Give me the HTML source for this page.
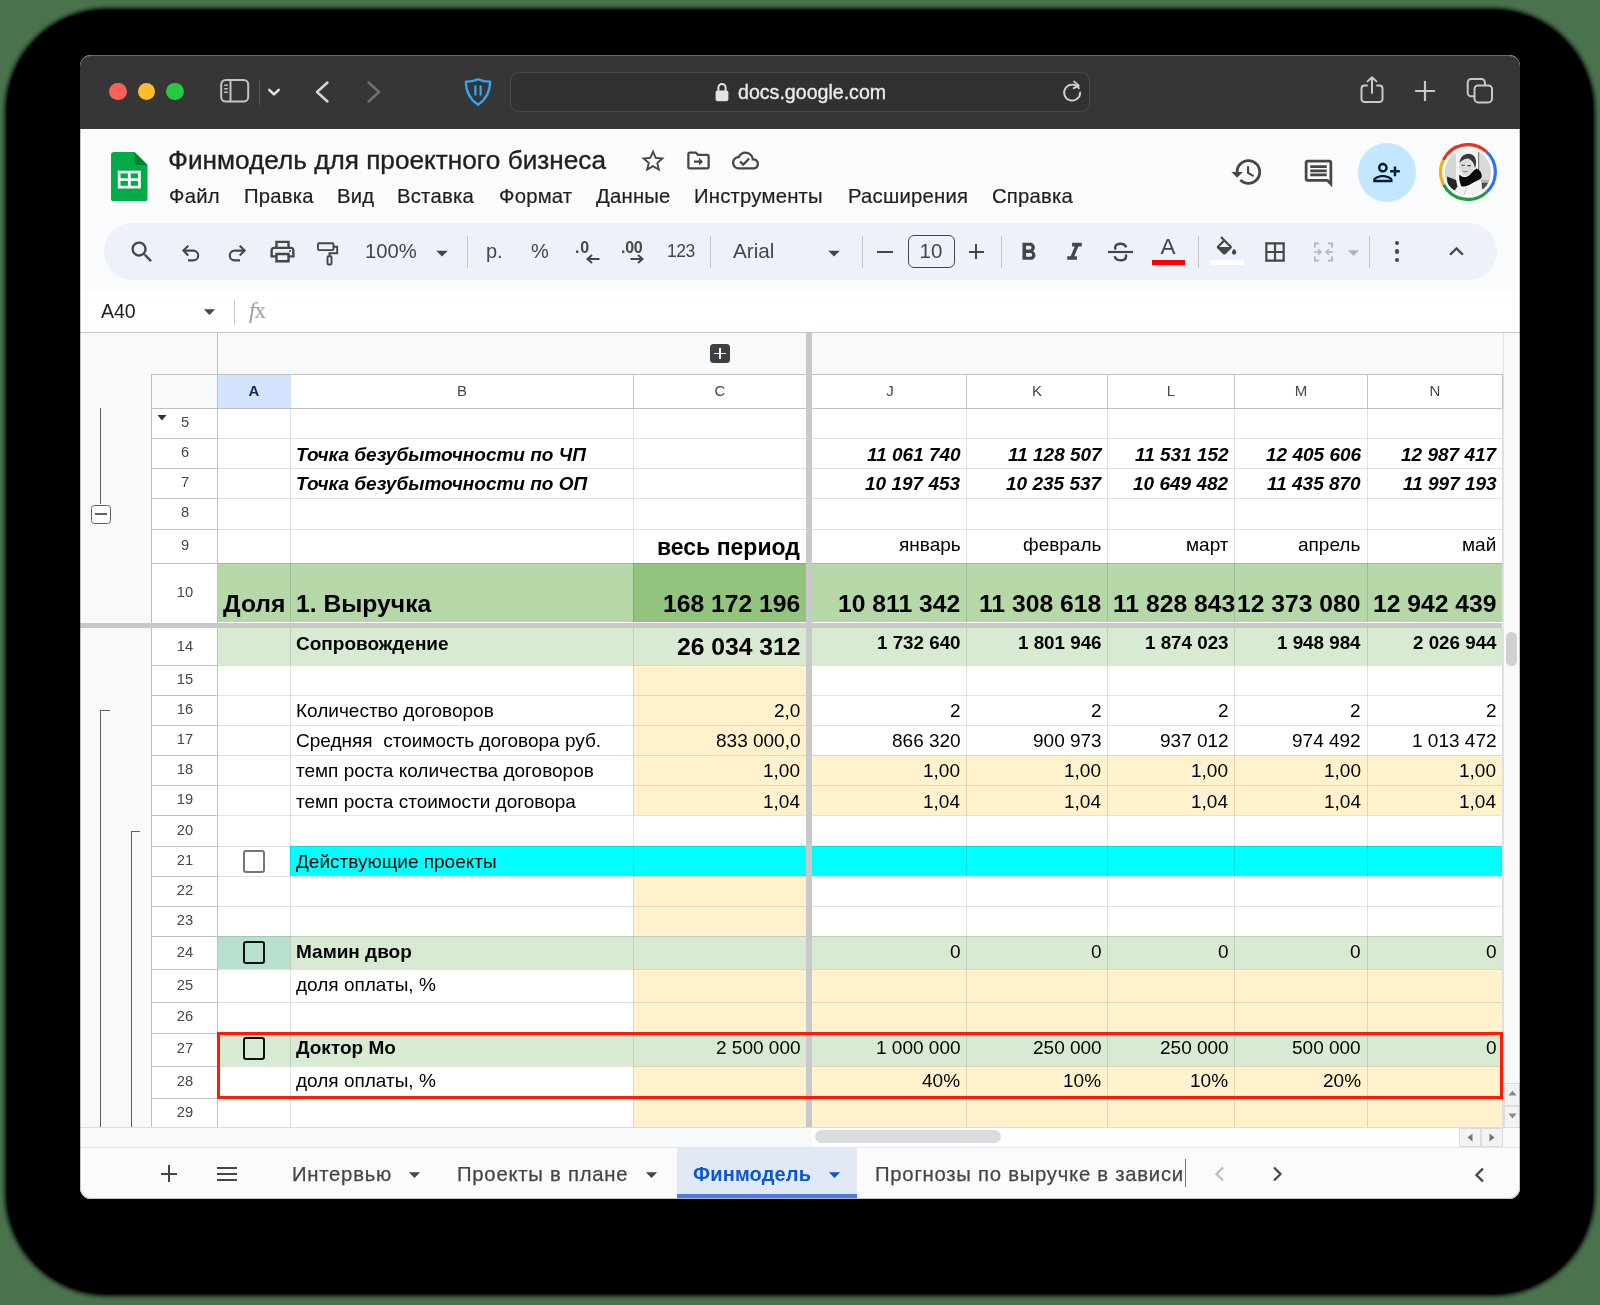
<!DOCTYPE html>
<html><head><meta charset="utf-8"><title>Sheets</title>
<style>
html,body{margin:0;padding:0}
body{width:1600px;height:1305px;overflow:hidden;background:#49724d;position:relative;font-family:"Liberation Sans",sans-serif;}
div,svg{position:absolute;box-sizing:border-box}
.t{white-space:pre;line-height:1;color:#000;will-change:transform}
#shadow{left:7px;top:10px;width:1586px;height:1284px;border-radius:100px;background:#000;box-shadow:0 0 4px 2px #000}
#win{left:80px;top:55px;width:1440px;height:1144px;border-radius:11px;overflow:hidden;background:#fff}
#wb{left:0;top:74px;width:1440px;height:1070px;border:1px solid rgba(0,0,0,.22);border-top:none;border-radius:0 0 11px 11px}
#pg{left:-80px;top:-55px;width:1600px;height:1305px;}
</style></head>
<body>
<div id="shadow"></div>
<div id="win"><div id="pg">
<div style="left:80px;top:55px;width:1440px;height:74.4px;background:#363636;border-top:1px solid #6c6c6c;border-radius:11px 11px 0 0"></div>
<div style="left:109.25px;top:82.75px;width:17.5px;height:17.5px;border-radius:50%;background:#fe5f57"></div>
<div style="left:137.75px;top:82.75px;width:17.5px;height:17.5px;border-radius:50%;background:#febc2e"></div>
<div style="left:166.25px;top:82.75px;width:17.5px;height:17.5px;border-radius:50%;background:#28c840"></div>
<svg style="left:219px;top:77px;" width="32" height="28" viewBox="0 0 32 28"><rect x="2.2" y="3" width="27" height="21.5" rx="4.5" fill="none" stroke="#c4c4c4" stroke-width="2"/><path d="M11.5 3v21.5" stroke="#c4c4c4" stroke-width="2"/><path d="M5.2 8.3h3.6M5.2 11.8h3.6M5.2 15.3h3.6" stroke="#c4c4c4" stroke-width="1.5"/></svg>
<div style="left:258.5px;top:80px;width:1px;height:25px;background:#555"></div>
<svg style="left:266px;top:84px;" width="16" height="16" viewBox="0 0 16 16"><path d="M3.2 5.8L8 10.4l4.8-4.6" fill="none" stroke="#e6e6e6" stroke-width="2.4" stroke-linecap="round" stroke-linejoin="round"/></svg>
<svg style="left:312px;top:79px;" width="22" height="26" viewBox="0 0 22 26"><path d="M15.5 3.5L5 13l10.5 9.5" fill="none" stroke="#d6d6d6" stroke-width="2.5" stroke-linecap="round" stroke-linejoin="round"/></svg>
<svg style="left:362px;top:79px;" width="22" height="26" viewBox="0 0 22 26"><path d="M6.5 3.5L17 13 6.5 22.5" fill="none" stroke="#707070" stroke-width="2.5" stroke-linecap="round" stroke-linejoin="round"/></svg>
<svg style="left:462px;top:76px;" width="32" height="32" viewBox="0 0 32 32"><path d="M16 3.2c4.2 1.9 8.2 2.5 12.2 2.4-.2 9.8-3.6 17.6-12.2 23.2C7.4 23.2 4 15.4 3.8 5.6c4 .1 8-.5 12.2-2.4z" fill="none" stroke="#35a7f2" stroke-width="2.3" stroke-linejoin="round"/><path d="M13.4 10.3v8.4M18.6 10.3v8.4" stroke="#35a7f2" stroke-width="2.2" stroke-linecap="round"/></svg>
<div style="left:510px;top:72px;width:579.5px;height:39.5px;background:#313131;border:1px solid #4b4b4b;border-radius:9px"></div>
<svg style="left:714px;top:81px;" width="16" height="22" viewBox="0 0 16 22"><rect x="1.6" y="9.6" width="12.8" height="10.6" rx="2" fill="#e4e4e4"/><path d="M4.4 10V6.6a3.6 3.6 0 0 1 7.2 0V10" fill="none" stroke="#e4e4e4" stroke-width="2"/></svg>
<div class="t" style="left:738px;top:83.3px;font-size:19.6px;color:#ececec;font-weight:normal;-webkit-text-stroke:0.35px #ececec">docs.google.com</div>
<svg style="left:1059px;top:79px;" width="26" height="26" viewBox="0 0 26 26"><path d="M20.3 10.2A8 8 0 1 0 21 14.6" fill="none" stroke="#cfcfcf" stroke-width="1.9" stroke-linecap="round" transform="rotate(-8 13 13)"/><path d="M15.2 2.6l4.6 4-5 2.6" fill="none" stroke="#cfcfcf" stroke-width="1.9" stroke-linecap="round" stroke-linejoin="round"/></svg>
<svg style="left:1358px;top:74px;" width="28" height="32" viewBox="0 0 28 32"><path d="M9 11.5H6.5a3 3 0 0 0-3 3v10.5a3 3 0 0 0 3 3h15a3 3 0 0 0 3-3V14.500a3 3 0 0 0-3-3H19" fill="none" stroke="#c9c9c9" stroke-width="2" stroke-linecap="round"/><path d="M14 19V3.6M9.6 7.4L14 3.2l4.400 4.200" fill="none" stroke="#c9c9c9" stroke-width="2" stroke-linecap="round" stroke-linejoin="round"/></svg>
<svg style="left:1413px;top:79px;" width="24" height="24" viewBox="0 0 24 24"><path d="M12 2.8v18.4M2.800 12h18.400" stroke="#c9c9c9" stroke-width="2.200" stroke-linecap="round"/></svg>
<svg style="left:1464px;top:75px;" width="32" height="30" viewBox="0 0 32 30"><rect x="3.700" y="4" width="17.200" height="17.300" rx="3.600" fill="none" stroke="#c9c9c9" stroke-width="2"/><rect x="10.500" y="10.400" width="17.500" height="17" rx="3.600" fill="#363636" stroke="#c9c9c9" stroke-width="2"/></svg>
<div style="left:80px;top:129px;width:1440px;height:163px;background:#f9fbfd"></div>
<svg style="left:111px;top:151.5px;" width="36.5" height="49.5" viewBox="0 0 36.500 49.500"><path d="M3 0h20.500L36.500 13v33.500a3 3 0 0 1-3 3H3a3 3 0 0 1-3-3V3a3 3 0 0 1 3-3z" fill="#00ac47"/><path d="M23.500 0L36.500 13H26.500a3 3 0 0 1-3-3z" fill="#00832d"/><rect x="6.800" y="18.700" width="23" height="17.800" fill="#fff"/><rect x="9.500" y="21.400" width="7.400" height="4.900" fill="#00ac47"/><rect x="19.700" y="21.400" width="7.400" height="4.900" fill="#00ac47"/><rect x="9.500" y="28.900" width="7.400" height="4.900" fill="#00ac47"/><rect x="19.700" y="28.900" width="7.400" height="4.900" fill="#00ac47"/></svg>
<div class="t" style="left:168px;top:147px;font-size:26.2px;color:#1f1f1f;-webkit-text-stroke:.35px #1f1f1f">Финмодель для проектного бизнеса</div>
<svg style="left:639.0px;top:146.5px;" width="28" height="28" viewBox="0 0 24 24"><path d="M22 9.240l-7.190-.62L12 2 9.190 8.630 2 9.240l5.460 4.730L5.820 21 12 17.270 18.180 21l-1.630-7.030L22 9.240zM12 15.400l-3.760 2.270 1-4.280-3.320-2.880 4.380-.38L12 6.100l1.710 4.040 4.380.38-3.320 2.880 1 4.280L12 15.400z" fill="#444746" /></svg>
<svg style="left:685.0px;top:147.0px;" width="27" height="27" viewBox="0 0 24 24"><path d="M20 6h-8l-2-2H4c-1.100 0-2 .9-2 2v12c0 1.100.9 2 2 2h16c1.100 0 2-.9 2-2V8c0-1.100-.9-2-2-2zm0 12H4V6h5.170l2 2H20v10zm-7.500-1.500l3.500-3.500-3.500-3.500v2.500H8v2h4.500v2.500z" fill="#444746" /></svg>
<svg style="left:731.5px;top:147.0px;" width="27" height="27" viewBox="0 0 24 24"><path d="M19.350 10.040C18.670 6.590 15.640 4 12 4 9.110 4 6.600 5.640 5.350 8.040 2.340 8.360 0 10.910 0 14c0 3.310 2.690 6 6 6h13c2.760 0 5-2.240 5-5 0-2.640-2.050-4.780-4.650-4.960zM19 18H6c-2.210 0-4-1.790-4-4s1.790-4 4-4h.71C7.370 7.690 9.480 6 12 6c3.040 0 5.500 2.460 5.500 5.500v.5H19c1.660 0 3 1.340 3 3s-1.340 3-3 3zm-9-3.820l-2.090-2.090L6.500 13.500 10 17l6.010-6.010-1.410-1.410z" fill="#444746" /></svg>
<div class="t" style="left:169px;top:186px;font-size:20.3px;color:#1f1f1f;letter-spacing:.22px;-webkit-text-stroke:.2px #1f1f1f">Файл</div>
<div class="t" style="left:243.5px;top:186px;font-size:20.3px;color:#1f1f1f;letter-spacing:.22px;-webkit-text-stroke:.2px #1f1f1f">Правка</div>
<div class="t" style="left:336.5px;top:186px;font-size:20.3px;color:#1f1f1f;letter-spacing:.22px;-webkit-text-stroke:.2px #1f1f1f">Вид</div>
<div class="t" style="left:397px;top:186px;font-size:20.3px;color:#1f1f1f;letter-spacing:.22px;-webkit-text-stroke:.2px #1f1f1f">Вставка</div>
<div class="t" style="left:498.5px;top:186px;font-size:20.3px;color:#1f1f1f;letter-spacing:.22px;-webkit-text-stroke:.2px #1f1f1f">Формат</div>
<div class="t" style="left:596px;top:186px;font-size:20.3px;color:#1f1f1f;letter-spacing:.22px;-webkit-text-stroke:.2px #1f1f1f">Данные</div>
<div class="t" style="left:694px;top:186px;font-size:20.3px;color:#1f1f1f;letter-spacing:.22px;-webkit-text-stroke:.2px #1f1f1f">Инструменты</div>
<div class="t" style="left:848px;top:186px;font-size:20.3px;color:#1f1f1f;letter-spacing:.22px;-webkit-text-stroke:.2px #1f1f1f">Расширения</div>
<div class="t" style="left:991.5px;top:186px;font-size:20.3px;color:#1f1f1f;letter-spacing:.22px;-webkit-text-stroke:.2px #1f1f1f">Справка</div>
<svg style="left:1229.5px;top:155.0px;" width="34" height="34" viewBox="0 0 24 24"><path d="M13 3c-4.970 0-9 4.030-9 9H1l3.890 3.890.07.14L9 12H6c0-3.870 3.130-7 7-7s7 3.130 7 7-3.130 7-7 7c-1.930 0-3.680-.79-4.940-2.060l-1.420 1.420C8.270 19.990 10.510 21 13 21c4.970 0 9-4.030 9-9s-4.030-9-9-9zm-1 5v5l4.280 2.540.72-1.210-3.500-2.080V8H12z" fill="#444746" /></svg>
<svg style="left:1301.5px;top:157.0px;" width="33" height="33" viewBox="0 0 24 24"><path d="M21.990 4c0-1.100-.89-2-1.990-2H4c-1.100 0-2 .9-2 2v12c0 1.100.9 2 2 2h14l4 4-.01-18zM20 4v13.170L18.830 16H4V4h16zM6 12h12v2H6zm0-3h12v2H6zm0-3h12v2H6z" fill="#444746" /></svg>
<div style="left:1357.5px;top:143px;width:58.5px;height:58.5px;border-radius:50%;background:#c2e7ff"></div>
<svg style="left:1372px;top:157.5px;" width="29" height="29" viewBox="0 0 24 24"><path d="M15 12c2.210 0 4-1.790 4-4s-1.790-4-4-4-4 1.790-4 4 1.790 4 4 4zm0-6c1.100 0 2 .9 2 2s-.9 2-2 2-2-.9-2-2 .9-2 2-2zm0 8c-2.670 0-8 1.340-8 4v2h16v-2c0-2.660-5.330-4-8-4zm6 4H9v-.01C9.200 17.290 12.300 16 15 16s5.800 1.290 6 2zM6 15v-3h3v-2H6V7H4v3H1v2h3v3z" fill="#001d35" transform="translate(24 0) scale(-1 1)"/></svg>
<svg style="left:1439px;top:143px;" width="58" height="58" viewBox="0 0 58 58"><defs><clipPath id="avc"><circle cx="28.800" cy="29.300" r="23"/></clipPath></defs><circle cx="29" cy="29" r="27" fill="#fff"/><path d="M4.37 16.99A27.4 27.4 0 0 1 47.33 8.64" fill="none" stroke="#ea3323" stroke-width="3.200"/><path d="M47.33 8.64A27.4 27.4 0 0 1 47.33 49.36" fill="none" stroke="#2b74f0" stroke-width="3.200"/><path d="M47.33 49.36A27.4 27.4 0 0 1 4.59 41.44" fill="none" stroke="#1e9e43" stroke-width="3.200"/><path d="M4.59 41.44A27.4 27.4 0 0 1 4.37 16.99" fill="none" stroke="#f3b01c" stroke-width="3.200"/><g clip-path="url(#avc)"><rect x="0" y="0" width="58" height="58" fill="#d6d6d6"/><rect x="17" y="4" width="22.500" height="44" fill="#f4f4f4"/><rect x="39.300" y="6" width="1" height="22" fill="#555"/><rect x="40.300" y="4" width="14" height="36" fill="#d9d9d9"/><rect x="41.500" y="36.800" width="10" height="3" fill="#b5b5b5"/><rect x="42.700" y="39.800" width="7" height="6" fill="#4c4c4c"/><path d="M8 33.500l9 3.500 1.500 6.500-3 4-7-5z" fill="#262626"/><ellipse cx="27.200" cy="24" rx="7" ry="9" fill="#dcdcdc" transform="rotate(-12 27.200 24)"/><path d="M20.500 20c.3-5.500 4.200-9.300 9-9.200 4.800.1 7.800 3.700 7.600 8.600-.1 2.600-.6 4.500-1.300 6-.6-4.500-2.500-8-6.500-9.800-3.200.2-6.500 1.500-8.800 4.400z" fill="#3a3a3a"/><path d="M22.500 22.300h3.300M28.500 22.600h3.200" stroke="#3b3b3b" stroke-width="1.100"/><path d="M23.500 27.800c1.500 1.300 3.700 1.300 5.200.3" stroke="#777" stroke-width=".9" fill="none"/><path d="M20.300 31.500c2.500 2.800 6.500 3.500 9.500 1.200 2.600-2 4.600-5.600 7.600-7.200 3 .800 5.700 4.300 5.300 8.300-1.500 3.700-6.500 5.400-10.500 7.800-2.500 1.600-6 2.800-9.500 2.300-1.800-3.400-3-8.400-2.400-12.400z" fill="#090909"/><path d="M16.500 54c.5-5.500 1.800-9 5.500-10.500 4 .5 7-.8 10.300-2.800 3-1.800 6.300-3.200 9.300-4.500 1.200 5 1.400 11 1 17.800z" fill="#f3f3f3"/><path d="M25 52l2.500-8" stroke="#c9c9c9" stroke-width="1"/></g></svg>
<div style="left:103.5px;top:222.5px;width:1393.5px;height:57.5px;background:#edf2fa;border-radius:29px"></div>
<svg style="left:127.5px;top:237.5px;" width="28" height="28" viewBox="0 0 24 24"><path d="M15.5 14h-.79l-.28-.27C15.41 12.59 16 11.11 16 9.5 16 5.91 13.09 3 9.5 3S3 5.910 3 9.5 5.910 16 9.5 16c1.610 0 3.090-.59 4.230-1.570l.27.28v.79l5 4.990L20.490 19l-4.990-5zm-6 0C7.010 14 5 11.990 5 9.5S7.010 5 9.5 5 14 7.010 14 9.5 11.990 14 9.5 14z" fill="#444746" /></svg>
<svg style="left:181px;top:243.5px;" width="20" height="20" viewBox="0 0 20 20"><path d="M7.300 1.700L2.400 6.600l4.900 4.900" fill="none" stroke="#444746" stroke-width="2.100"/><path d="M2.800 6.600h9.500a4.900 4.900 0 0 1 0 9.800H7" fill="none" stroke="#444746" stroke-width="2.100"/></svg>
<svg style="left:226.5px;top:243.5px;" width="20" height="20" viewBox="0 0 20 20"><g transform="translate(20 0) scale(-1 1)"><path d="M7.300 1.700L2.400 6.600l4.900 4.900" fill="none" stroke="#444746" stroke-width="2.100"/><path d="M2.800 6.600h9.500a4.900 4.900 0 0 1 0 9.800H7" fill="none" stroke="#444746" stroke-width="2.100"/></g></svg>
<svg style="left:268.0px;top:237.0px;" width="29" height="29" viewBox="0 0 24 24"><path d="M19 8h-1V3H6v5H5c-1.660 0-3 1.340-3 3v6h4v4h12v-4h4v-6c0-1.660-1.340-3-3-3zM8 5h8v3H8V5zm8 14H8v-4h8v4zm4-4h-2v-2H6v2H4v-4c0-.55.45-1 1-1h14c.55 0 1 .45 1 1v4z" fill="#444746" /></svg>
<div style="left:288.600px;top:249.500px;width:2.400px;height:2.400px;border-radius:50%;background:#444746"></div>
<svg style="left:315.5px;top:240.5px;" width="24" height="26" viewBox="0 0 24 26"><rect x="2" y="2.300" width="15.500" height="6.800" rx="1" fill="none" stroke="#444746" stroke-width="1.900"/><path d="M17.500 5.700h3.700v6.600H13.500v3" fill="none" stroke="#444746" stroke-width="1.900"/><rect x="11.500" y="15.200" width="4" height="8.300" rx="1" fill="none" stroke="#444746" stroke-width="1.900"/></svg>
<div class="t" style="left:365px;top:241px;font-size:20.200px;color:#444746">100%</div>
<svg style="left:428.0px;top:238.5px;" width="28" height="28" viewBox="0 0 24 24"><path d="M7 10l5 5 5-5z" fill="#444746" /></svg>
<div style="left:467px;top:236px;width:1px;height:32px;background:#c7c7c7"></div>
<div class="t" style="left:486px;top:241px;font-size:20px;color:#444746">р.</div>
<div class="t" style="left:531px;top:241px;font-size:20px;color:#444746">%</div>
<div class="t" style="left:575px;top:240px;font-size:16px;color:#444746;font-weight:bold;letter-spacing:.8px">.0</div>
<svg style="left:585px;top:254px;" width="16" height="10" viewBox="0 0 16 10"><path d="M14.500 5H3M7 1L2.500 5 7 9" fill="none" stroke="#444746" stroke-width="2"/></svg>
<div class="t" style="left:620.5px;top:240px;font-size:16px;color:#444746;font-weight:bold;letter-spacing:-.3px">.00</div>
<svg style="left:629px;top:254px;" width="16" height="10" viewBox="0 0 16 10"><path d="M1.500 5H13M9 1l4.500 4L9 9" fill="none" stroke="#444746" stroke-width="2"/></svg>
<div class="t" style="left:667px;top:243px;font-size:17.500px;color:#444746;letter-spacing:-.5px">123</div>
<div style="left:709.5px;top:236px;width:1px;height:32px;background:#c7c7c7"></div>
<div class="t" style="left:733px;top:241px;font-size:20.700px;color:#444746">Arial</div>
<svg style="left:819.5px;top:238.5px;" width="28" height="28" viewBox="0 0 24 24"><path d="M7 10l5 5 5-5z" fill="#444746" /></svg>
<div style="left:861.5px;top:236px;width:1px;height:32px;background:#c7c7c7"></div>
<div style="left:877px;top:250.5px;width:15.5px;height:2px;background:#444746"></div>
<div style="left:907.5px;top:234.5px;width:47.5px;height:33px;border:1.300px solid #444746;border-radius:6px"></div>
<div class="t" style="left:731px;width:400px;text-align:center;top:241px;font-size:20.500px;color:#444746">10</div>
<div style="left:968.5px;top:250.5px;width:15.5px;height:2px;background:#444746"></div>
<div style="left:975.25px;top:243.75px;width:2px;height:15.5px;background:#444746"></div>
<div style="left:1000.5px;top:236px;width:1px;height:32px;background:#c7c7c7"></div>
<svg style="left:1014.0px;top:237.5px;" width="29" height="29" viewBox="0 0 24 24"><path d="M15.6 10.790c.97-.67 1.650-1.770 1.650-2.790 0-2.260-1.750-4-4-4H7v14h7.040c2.090 0 3.710-1.700 3.710-3.790 0-1.520-.86-2.820-2.150-3.420zM10 6.500h3c.83 0 1.500.67 1.500 1.500s-.67 1.500-1.500 1.500h-3v-3zm3.500 9H10v-3h3.500c.83 0 1.500.67 1.500 1.500s-.67 1.500-1.500 1.500z" fill="#444746" /></svg>
<svg style="left:1060.0px;top:237.5px;" width="29" height="29" viewBox="0 0 24 24"><path d="M10 4v3h2.210l-3.420 8H6v3h8v-3h-2.210l3.420-8H18V4z" fill="#444746" /></svg>
<svg style="left:1106px;top:238px;" width="29" height="28" viewBox="0 0 29 28"><path d="M2 14h25" stroke="#444746" stroke-width="2.200"/><path d="M20.200 9.300c-.8-2.300-2.900-3.600-5.700-3.600-3.200 0-5.400 1.600-5.400 3.800 0 .8.300 1.500.8 2.100" fill="none" stroke="#444746" stroke-width="2.400"/><path d="M8.600 18.300c.7 2.500 2.900 4 5.900 4 3.300 0 5.600-1.600 5.600-4 0-.7-.2-1.300-.5-1.800" fill="none" stroke="#444746" stroke-width="2.400"/></svg>
<div class="t" style="left:968px;width:400px;text-align:center;top:236px;font-size:22.500px;color:#444746">A</div>
<div style="left:1151.5px;top:260px;width:33.5px;height:5.2px;background:#f00"></div>
<div style="left:1197.5px;top:236px;width:1px;height:32px;background:#c7c7c7"></div>
<svg style="left:1213px;top:233.5px;" width="27" height="27" viewBox="0 0 24 24"><path d="M16.560 8.940L7.620 0 6.210 1.410l2.380 2.380-5.150 5.150c-.59.59-.59 1.540 0 2.120l5.500 5.500c.29.29.68.44 1.060.44s.77-.15 1.060-.44l5.500-5.500c.59-.58.59-1.530 0-2.120zM5.210 10L10 5.210 14.790 10H5.210zM19 11.500s-2 2.170-2 3.500c0 1.100.9 2 2 2s2-.9 2-2c0-1.330-2-3.500-2-3.500z" fill="#444746" transform="translate(.5 2) scale(.96)"/></svg>
<div style="left:1210px;top:260px;width:33.5px;height:5.2px;background:#fff"></div>
<svg style="left:1262.0px;top:239.0px;" width="26" height="26" viewBox="0 0 24 24"><path d="M3 3v18h18V3H3zm8 16H5v-6h6v6zm0-8H5V5h6v6zm8 8h-6v-6h6v6zm0-8h-6V5h6v6z" fill="#444746" /></svg>
<svg style="left:1312px;top:241px;" width="23" height="22" viewBox="0 0 29 28"><path d="M9 3H3.500v5.500M9 25H3.500v-5.500M20 3h5.500v5.500M20 25h5.500v-5.500" fill="none" stroke="#b0b4b9" stroke-width="2.200"/><path d="M2.500 14h8.500M7.500 10.500L11.300 14 7.500 17.500M26.500 14H18M21.500 10.500L17.700 14l3.800 3.500" fill="none" stroke="#b0b4b9" stroke-width="2"/></svg>
<svg style="left:1339.5px;top:239.0px;" width="27" height="27" viewBox="0 0 24 24"><path d="M7 10l5 5 5-5z" fill="#b0b4b9" /></svg>
<div style="left:1368.5px;top:236px;width:1px;height:32px;background:#c7c7c7"></div>
<div style="left:1394.5px;top:240.89999999999998px;width:4.6px;height:4.6px;border-radius:50%;background:#444746"></div>
<div style="left:1394.5px;top:249.2px;width:4.6px;height:4.6px;border-radius:50%;background:#444746"></div>
<div style="left:1394.5px;top:257.5px;width:4.6px;height:4.6px;border-radius:50%;background:#444746"></div>
<svg style="left:1442.0px;top:236.5px;" width="29" height="29" viewBox="0 0 24 24"><path d="M12 8l-6 6 1.410 1.410L12 10.830l4.590 4.580L18 14z" fill="#444746" /></svg>
<div style="left:80px;top:291.5px;width:1440px;height:41px;background:#fff;border-bottom:1px solid #c4c7c5"></div>
<div class="t" style="left:101px;top:302px;font-size:19.500px;color:#202124">A40</div>
<svg style="left:196.0px;top:298.0px;" width="27" height="27" viewBox="0 0 24 24"><path d="M7 10l5 5 5-5z" fill="#444746" /></svg>
<div style="left:233.5px;top:300px;width:1px;height:24.5px;background:#c7c7c7"></div>
<div class="t" style="left:248.5px;top:299px;font-family:'Liberation Serif',serif;font-size:23px;color:#9aa0a6;font-style:normal;letter-spacing:-1px"><i>f</i>x</div>
<div style="left:80px;top:332.5px;width:1440px;height:814.5px;background:#f8f9fa"></div>
<div style="left:217px;top:374px;width:1285px;height:753px;background:#fff"></div>
<div style="left:151px;top:408px;width:66px;height:719px;background:#fff"></div>
<div style="left:217px;top:563px;width:589px;height:59px;background:#b6d7a8"></div>
<div style="left:812px;top:563px;width:690px;height:59px;background:#b6d7a8"></div>
<div style="left:633px;top:563px;width:173px;height:59px;background:#93c47d"></div>
<div style="left:217px;top:628px;width:589px;height:37px;background:#d9ead3"></div>
<div style="left:812px;top:628px;width:690px;height:37px;background:#d9ead3"></div>
<div style="left:633px;top:665px;width:173px;height:30px;background:#fff2cc"></div>
<div style="left:633px;top:695px;width:173px;height:30px;background:#fff2cc"></div>
<div style="left:633px;top:725px;width:173px;height:30px;background:#fff2cc"></div>
<div style="left:633px;top:755px;width:173px;height:30px;background:#fff2cc"></div>
<div style="left:633px;top:785px;width:173px;height:30px;background:#fff2cc"></div>
<div style="left:633px;top:876px;width:173px;height:30px;background:#fff2cc"></div>
<div style="left:633px;top:906px;width:173px;height:30px;background:#fff2cc"></div>
<div style="left:633px;top:969px;width:173px;height:33px;background:#fff2cc"></div>
<div style="left:633px;top:1002px;width:173px;height:30.5px;background:#fff2cc"></div>
<div style="left:633px;top:1065.5px;width:173px;height:32.5px;background:#fff2cc"></div>
<div style="left:633px;top:1098px;width:173px;height:32px;background:#fff2cc"></div>
<div style="left:812px;top:755px;width:690px;height:30px;background:#fff2cc"></div>
<div style="left:812px;top:785px;width:690px;height:30px;background:#fff2cc"></div>
<div style="left:812px;top:969px;width:690px;height:33px;background:#fff2cc"></div>
<div style="left:812px;top:1002px;width:690px;height:30.5px;background:#fff2cc"></div>
<div style="left:812px;top:1065.5px;width:690px;height:32.5px;background:#fff2cc"></div>
<div style="left:812px;top:1098px;width:690px;height:32px;background:#fff2cc"></div>
<div style="left:290px;top:846px;width:516px;height:30px;background:#00ffff"></div>
<div style="left:812px;top:846px;width:690px;height:30px;background:#00ffff"></div>
<div style="left:217px;top:936px;width:589px;height:33px;background:#d9ead3"></div>
<div style="left:812px;top:936px;width:690px;height:33px;background:#d9ead3"></div>
<div style="left:217px;top:936px;width:73px;height:33px;background:#b7e1cd"></div>
<div style="left:217px;top:1032.5px;width:589px;height:33.0px;background:#d9ead3"></div>
<div style="left:812px;top:1032.5px;width:690px;height:33.0px;background:#d9ead3"></div>
<div style="left:217px;top:438px;width:589px;height:1px;background:rgba(0,0,0,.115)"></div>
<div style="left:812px;top:438px;width:690px;height:1px;background:rgba(0,0,0,.115)"></div>
<div style="left:217px;top:468px;width:589px;height:1px;background:rgba(0,0,0,.115)"></div>
<div style="left:812px;top:468px;width:690px;height:1px;background:rgba(0,0,0,.115)"></div>
<div style="left:217px;top:498px;width:589px;height:1px;background:rgba(0,0,0,.115)"></div>
<div style="left:812px;top:498px;width:690px;height:1px;background:rgba(0,0,0,.115)"></div>
<div style="left:217px;top:528.5px;width:589px;height:1px;background:rgba(0,0,0,.115)"></div>
<div style="left:812px;top:528.5px;width:690px;height:1px;background:rgba(0,0,0,.115)"></div>
<div style="left:217px;top:563px;width:589px;height:1px;background:rgba(0,0,0,.115)"></div>
<div style="left:812px;top:563px;width:690px;height:1px;background:rgba(0,0,0,.115)"></div>
<div style="left:217px;top:665px;width:589px;height:1px;background:rgba(0,0,0,.115)"></div>
<div style="left:812px;top:665px;width:690px;height:1px;background:rgba(0,0,0,.115)"></div>
<div style="left:217px;top:695px;width:589px;height:1px;background:rgba(0,0,0,.115)"></div>
<div style="left:812px;top:695px;width:690px;height:1px;background:rgba(0,0,0,.115)"></div>
<div style="left:217px;top:725px;width:589px;height:1px;background:rgba(0,0,0,.115)"></div>
<div style="left:812px;top:725px;width:690px;height:1px;background:rgba(0,0,0,.115)"></div>
<div style="left:217px;top:755px;width:589px;height:1px;background:rgba(0,0,0,.115)"></div>
<div style="left:812px;top:755px;width:690px;height:1px;background:rgba(0,0,0,.115)"></div>
<div style="left:217px;top:785px;width:589px;height:1px;background:rgba(0,0,0,.115)"></div>
<div style="left:812px;top:785px;width:690px;height:1px;background:rgba(0,0,0,.115)"></div>
<div style="left:217px;top:815px;width:589px;height:1px;background:rgba(0,0,0,.115)"></div>
<div style="left:812px;top:815px;width:690px;height:1px;background:rgba(0,0,0,.115)"></div>
<div style="left:217px;top:846px;width:589px;height:1px;background:rgba(0,0,0,.115)"></div>
<div style="left:812px;top:846px;width:690px;height:1px;background:rgba(0,0,0,.115)"></div>
<div style="left:217px;top:876px;width:589px;height:1px;background:rgba(0,0,0,.115)"></div>
<div style="left:812px;top:876px;width:690px;height:1px;background:rgba(0,0,0,.115)"></div>
<div style="left:217px;top:906px;width:589px;height:1px;background:rgba(0,0,0,.115)"></div>
<div style="left:812px;top:906px;width:690px;height:1px;background:rgba(0,0,0,.115)"></div>
<div style="left:217px;top:936px;width:589px;height:1px;background:rgba(0,0,0,.115)"></div>
<div style="left:812px;top:936px;width:690px;height:1px;background:rgba(0,0,0,.115)"></div>
<div style="left:217px;top:969px;width:589px;height:1px;background:rgba(0,0,0,.115)"></div>
<div style="left:812px;top:969px;width:690px;height:1px;background:rgba(0,0,0,.115)"></div>
<div style="left:217px;top:1002px;width:589px;height:1px;background:rgba(0,0,0,.115)"></div>
<div style="left:812px;top:1002px;width:690px;height:1px;background:rgba(0,0,0,.115)"></div>
<div style="left:217px;top:1032.5px;width:589px;height:1px;background:rgba(0,0,0,.115)"></div>
<div style="left:812px;top:1032.5px;width:690px;height:1px;background:rgba(0,0,0,.115)"></div>
<div style="left:217px;top:1065.5px;width:589px;height:1px;background:rgba(0,0,0,.115)"></div>
<div style="left:812px;top:1065.5px;width:690px;height:1px;background:rgba(0,0,0,.115)"></div>
<div style="left:217px;top:1098px;width:589px;height:1px;background:rgba(0,0,0,.115)"></div>
<div style="left:812px;top:1098px;width:690px;height:1px;background:rgba(0,0,0,.115)"></div>
<div style="left:290px;top:408px;width:1px;height:214px;background:rgba(0,0,0,.115)"></div>
<div style="left:290px;top:628px;width:1px;height:499px;background:rgba(0,0,0,.115)"></div>
<div style="left:633px;top:408px;width:1px;height:214px;background:rgba(0,0,0,.115)"></div>
<div style="left:633px;top:628px;width:1px;height:499px;background:rgba(0,0,0,.115)"></div>
<div style="left:966px;top:408px;width:1px;height:214px;background:rgba(0,0,0,.115)"></div>
<div style="left:966px;top:628px;width:1px;height:499px;background:rgba(0,0,0,.115)"></div>
<div style="left:1107px;top:408px;width:1px;height:214px;background:rgba(0,0,0,.115)"></div>
<div style="left:1107px;top:628px;width:1px;height:499px;background:rgba(0,0,0,.115)"></div>
<div style="left:1234px;top:408px;width:1px;height:214px;background:rgba(0,0,0,.115)"></div>
<div style="left:1234px;top:628px;width:1px;height:499px;background:rgba(0,0,0,.115)"></div>
<div style="left:1366.5px;top:408px;width:1px;height:214px;background:rgba(0,0,0,.115)"></div>
<div style="left:1366.5px;top:628px;width:1px;height:499px;background:rgba(0,0,0,.115)"></div>
<div style="left:1502px;top:408px;width:1px;height:214px;background:rgba(0,0,0,.115)"></div>
<div style="left:1502px;top:628px;width:1px;height:499px;background:rgba(0,0,0,.115)"></div>
<div style="left:151px;top:438px;width:66px;height:1px;background:#c0c0c0"></div>
<div style="left:151px;top:468px;width:66px;height:1px;background:#c0c0c0"></div>
<div style="left:151px;top:498px;width:66px;height:1px;background:#c0c0c0"></div>
<div style="left:151px;top:528.5px;width:66px;height:1px;background:#c0c0c0"></div>
<div style="left:151px;top:563px;width:66px;height:1px;background:#c0c0c0"></div>
<div style="left:151px;top:665px;width:66px;height:1px;background:#c0c0c0"></div>
<div style="left:151px;top:695px;width:66px;height:1px;background:#c0c0c0"></div>
<div style="left:151px;top:725px;width:66px;height:1px;background:#c0c0c0"></div>
<div style="left:151px;top:755px;width:66px;height:1px;background:#c0c0c0"></div>
<div style="left:151px;top:785px;width:66px;height:1px;background:#c0c0c0"></div>
<div style="left:151px;top:815px;width:66px;height:1px;background:#c0c0c0"></div>
<div style="left:151px;top:846px;width:66px;height:1px;background:#c0c0c0"></div>
<div style="left:151px;top:876px;width:66px;height:1px;background:#c0c0c0"></div>
<div style="left:151px;top:906px;width:66px;height:1px;background:#c0c0c0"></div>
<div style="left:151px;top:936px;width:66px;height:1px;background:#c0c0c0"></div>
<div style="left:151px;top:969px;width:66px;height:1px;background:#c0c0c0"></div>
<div style="left:151px;top:1002px;width:66px;height:1px;background:#c0c0c0"></div>
<div style="left:151px;top:1032.5px;width:66px;height:1px;background:#c0c0c0"></div>
<div style="left:151px;top:1065.5px;width:66px;height:1px;background:#c0c0c0"></div>
<div style="left:151px;top:1098px;width:66px;height:1px;background:#c0c0c0"></div>
<div style="left:151px;top:374px;width:1px;height:753px;background:#c0c0c0"></div>
<div style="left:217px;top:332.5px;width:1px;height:794.5px;background:#c0c0c0"></div>
<div style="left:151px;top:374px;width:1351px;height:1px;background:#c0c0c0"></div>
<div style="left:151px;top:408px;width:1351px;height:1px;background:#c0c0c0"></div>
<div style="left:290px;top:374px;width:1px;height:34px;background:#c0c0c0"></div>
<div style="left:633px;top:374px;width:1px;height:34px;background:#c0c0c0"></div>
<div style="left:966px;top:374px;width:1px;height:34px;background:#c0c0c0"></div>
<div style="left:1107px;top:374px;width:1px;height:34px;background:#c0c0c0"></div>
<div style="left:1234px;top:374px;width:1px;height:34px;background:#c0c0c0"></div>
<div style="left:1366.5px;top:374px;width:1px;height:34px;background:#c0c0c0"></div>
<div style="left:1502px;top:374px;width:1px;height:34px;background:#c0c0c0"></div>
<div style="left:1503px;top:332.5px;width:1px;height:794.5px;background:#e3e3e3"></div>
<div style="left:218px;top:375px;width:72.5px;height:33px;background:#d3e3fd"></div>
<div class="t" style="left:54.0px;width:400px;text-align:center;top:383px;font-size:15px;color:#444746;font-weight:bold;color:#0b2a5c">A</div>
<div class="t" style="left:262.0px;width:400px;text-align:center;top:383px;font-size:15px;color:#444746">B</div>
<div class="t" style="left:520.0px;width:400px;text-align:center;top:383px;font-size:15px;color:#444746">C</div>
<div class="t" style="left:689.5px;width:400px;text-align:center;top:383px;font-size:15px;color:#444746">J</div>
<div class="t" style="left:837.0px;width:400px;text-align:center;top:383px;font-size:15px;color:#444746">K</div>
<div class="t" style="left:971.0px;width:400px;text-align:center;top:383px;font-size:15px;color:#444746">L</div>
<div class="t" style="left:1100.75px;width:400px;text-align:center;top:383px;font-size:15px;color:#444746">M</div>
<div class="t" style="left:1234.75px;width:400px;text-align:center;top:383px;font-size:15px;color:#444746">N</div>
<div class="t" style="left:-15.5px;width:400px;text-align:center;top:415.0px;font-size:14.700px;color:#444746">5</div>
<div class="t" style="left:-15.5px;width:400px;text-align:center;top:445.0px;font-size:14.700px;color:#444746">6</div>
<div class="t" style="left:-15.5px;width:400px;text-align:center;top:475.0px;font-size:14.700px;color:#444746">7</div>
<div class="t" style="left:-15.5px;width:400px;text-align:center;top:505.25px;font-size:14.700px;color:#444746">8</div>
<div class="t" style="left:-15.5px;width:400px;text-align:center;top:537.75px;font-size:14.700px;color:#444746">9</div>
<div class="t" style="left:-15.5px;width:400px;text-align:center;top:584.5px;font-size:14.700px;color:#444746">10</div>
<div class="t" style="left:-15.5px;width:400px;text-align:center;top:638.5px;font-size:14.700px;color:#444746">14</div>
<div class="t" style="left:-15.5px;width:400px;text-align:center;top:672.0px;font-size:14.700px;color:#444746">15</div>
<div class="t" style="left:-15.5px;width:400px;text-align:center;top:702.0px;font-size:14.700px;color:#444746">16</div>
<div class="t" style="left:-15.5px;width:400px;text-align:center;top:732.0px;font-size:14.700px;color:#444746">17</div>
<div class="t" style="left:-15.5px;width:400px;text-align:center;top:762.0px;font-size:14.700px;color:#444746">18</div>
<div class="t" style="left:-15.5px;width:400px;text-align:center;top:792.0px;font-size:14.700px;color:#444746">19</div>
<div class="t" style="left:-15.5px;width:400px;text-align:center;top:822.5px;font-size:14.700px;color:#444746">20</div>
<div class="t" style="left:-15.5px;width:400px;text-align:center;top:853.0px;font-size:14.700px;color:#444746">21</div>
<div class="t" style="left:-15.5px;width:400px;text-align:center;top:883.0px;font-size:14.700px;color:#444746">22</div>
<div class="t" style="left:-15.5px;width:400px;text-align:center;top:913.0px;font-size:14.700px;color:#444746">23</div>
<div class="t" style="left:-15.5px;width:400px;text-align:center;top:944.5px;font-size:14.700px;color:#444746">24</div>
<div class="t" style="left:-15.5px;width:400px;text-align:center;top:977.5px;font-size:14.700px;color:#444746">25</div>
<div class="t" style="left:-15.5px;width:400px;text-align:center;top:1009.25px;font-size:14.700px;color:#444746">26</div>
<div class="t" style="left:-15.5px;width:400px;text-align:center;top:1041.0px;font-size:14.700px;color:#444746">27</div>
<div class="t" style="left:-15.5px;width:400px;text-align:center;top:1073.75px;font-size:14.700px;color:#444746">28</div>
<div class="t" style="left:-15.5px;width:400px;text-align:center;top:1104.5px;font-size:14.700px;color:#444746">29</div>
<svg style="left:157px;top:414px;" width="10" height="8" viewBox="0 0 10 8"><path d="M.5 1h9L5 6.500z" fill="#333"/></svg>
<div style="left:806px;top:332.5px;width:6px;height:794.5px;background:#c9c9c9"></div>
<div style="left:80px;top:622.5px;width:1422px;height:5.9px;background:#c9c9c9"></div>
<div style="left:710px;top:343.5px;width:19.5px;height:19.5px;background:#3c4043;border-radius:3.500px"></div>
<div style="left:714px;top:352.5px;width:11.5px;height:1.8px;background:#fff"></div>
<div style="left:718.85px;top:347.5px;width:1.8px;height:11.5px;background:#fff"></div>
<div style="left:100px;top:408px;width:1.3px;height:96px;background:#5f6368"></div>
<div style="left:90.5px;top:504.5px;width:20.5px;height:19px;border:1.500px solid #5f6368;border-radius:3.500px;background:#fff"></div>
<div style="left:95px;top:513.2px;width:11.5px;height:1.6px;background:#5f6368"></div>
<div style="left:100px;top:710px;width:1.3px;height:417px;background:#5f6368"></div>
<div style="left:100px;top:710px;width:10px;height:1.3px;background:#5f6368"></div>
<div style="left:130.5px;top:831px;width:1.3px;height:296px;background:#5f6368"></div>
<div style="left:130.5px;top:831px;width:9.5px;height:1.3px;background:#5f6368"></div>
<div class="t" style="left:296px;top:444.6165px;font-size:19px;font-weight:bold;font-style:italic">Точка безубыточности по ЧП</div>
<div class="t" style="left:296px;top:474.4165px;font-size:19px;font-weight:bold;font-style:italic">Точка безубыточности по ОП</div>
<div class="t" style="right:639.8px;top:444.6165px;font-size:19px;font-weight:bold;font-style:italic">11 061 740</div>
<div class="t" style="right:498.79999999999995px;top:444.6165px;font-size:19px;font-weight:bold;font-style:italic">11 128 507</div>
<div class="t" style="right:371.79999999999995px;top:444.6165px;font-size:19px;font-weight:bold;font-style:italic">11 531 152</div>
<div class="t" style="right:239.29999999999995px;top:444.6165px;font-size:19px;font-weight:bold;font-style:italic">12 405 606</div>
<div class="t" style="right:103.79999999999995px;top:444.6165px;font-size:19px;font-weight:bold;font-style:italic">12 987 417</div>
<div class="t" style="right:639.8px;top:474.4165px;font-size:19px;font-weight:bold;font-style:italic">10 197 453</div>
<div class="t" style="right:498.79999999999995px;top:474.4165px;font-size:19px;font-weight:bold;font-style:italic">10 235 537</div>
<div class="t" style="right:371.79999999999995px;top:474.4165px;font-size:19px;font-weight:bold;font-style:italic">10 649 482</div>
<div class="t" style="right:239.29999999999995px;top:474.4165px;font-size:19px;font-weight:bold;font-style:italic">11 435 870</div>
<div class="t" style="right:103.79999999999995px;top:474.4165px;font-size:19px;font-weight:bold;font-style:italic">11 997 193</div>
<div class="t" style="right:799.8px;top:536.0305px;font-size:23px;font-weight:bold">весь период</div>
<div class="t" style="right:639.8px;top:535.2165px;font-size:19px;">январь</div>
<div class="t" style="right:498.79999999999995px;top:535.2165px;font-size:19px;">февраль</div>
<div class="t" style="right:371.79999999999995px;top:535.2165px;font-size:19px;">март</div>
<div class="t" style="right:239.29999999999995px;top:535.2165px;font-size:19px;">апрель</div>
<div class="t" style="right:103.79999999999995px;top:535.2165px;font-size:19px;">май</div>
<div class="t" style="left:223px;top:592.49145px;font-size:24.7px;font-weight:bold;margin-left:-.5px">Доля</div>
<div class="t" style="left:296px;top:592.49145px;font-size:24.7px;font-weight:bold">1. Выручка</div>
<div class="t" style="right:799.8px;top:592.49145px;font-size:24.7px;font-weight:bold">168 172 196</div>
<div class="t" style="right:639.8px;top:592.49145px;font-size:24.7px;font-weight:bold">10 811 342</div>
<div class="t" style="right:498.79999999999995px;top:592.49145px;font-size:24.7px;font-weight:bold">11 308 618</div>
<div class="t" style="right:239.29999999999995px;top:592.49145px;font-size:24.7px;font-weight:bold">12 373 080</div>
<div class="t" style="right:103.79999999999995px;top:592.49145px;font-size:24.7px;font-weight:bold">12 942 439</div>
<div class="t" style="right:364.70000000000005px;top:592.49145px;font-size:24.700px;font-weight:bold">11 828 843</div>
<div class="t" style="left:296px;top:633.9165px;font-size:19px;font-weight:bold">Сопровождение</div>
<div class="t" style="right:799.8px;top:635.39145px;font-size:24.7px;font-weight:bold">26 034 312</div>
<div class="t" style="right:639.8px;top:634.3857999999999px;font-size:18.8px;font-weight:bold">1 732 640</div>
<div class="t" style="right:498.79999999999995px;top:634.3857999999999px;font-size:18.8px;font-weight:bold">1 801 946</div>
<div class="t" style="right:371.79999999999995px;top:634.3857999999999px;font-size:18.8px;font-weight:bold">1 874 023</div>
<div class="t" style="right:239.29999999999995px;top:634.3857999999999px;font-size:18.8px;font-weight:bold">1 948 984</div>
<div class="t" style="right:103.79999999999995px;top:634.3857999999999px;font-size:18.8px;font-weight:bold">2 026 944</div>
<div class="t" style="left:296px;top:701.2165px;font-size:19px;">Количество договоров</div>
<div class="t" style="right:799.8px;top:701.2165px;font-size:19px;">2,0</div>
<div class="t" style="right:639.8px;top:701.2165px;font-size:19px;">2</div>
<div class="t" style="right:498.79999999999995px;top:701.2165px;font-size:19px;">2</div>
<div class="t" style="right:371.79999999999995px;top:701.2165px;font-size:19px;">2</div>
<div class="t" style="right:239.29999999999995px;top:701.2165px;font-size:19px;">2</div>
<div class="t" style="right:103.79999999999995px;top:701.2165px;font-size:19px;">2</div>
<div class="t" style="left:296px;top:731.4165px;font-size:19px;">Средняя  стоимость договора руб.</div>
<div class="t" style="right:799.8px;top:731.4165px;font-size:19px;">833 000,0</div>
<div class="t" style="right:639.8px;top:731.4165px;font-size:19px;">866 320</div>
<div class="t" style="right:498.79999999999995px;top:731.4165px;font-size:19px;">900 973</div>
<div class="t" style="right:371.79999999999995px;top:731.4165px;font-size:19px;">937 012</div>
<div class="t" style="right:239.29999999999995px;top:731.4165px;font-size:19px;">974 492</div>
<div class="t" style="right:103.79999999999995px;top:731.4165px;font-size:19px;">1 013 472</div>
<div class="t" style="left:296px;top:761.4165px;font-size:19px;">темп роста количества договоров</div>
<div class="t" style="right:799.8px;top:761.4165px;font-size:19px;">1,00</div>
<div class="t" style="right:639.8px;top:761.4165px;font-size:19px;">1,00</div>
<div class="t" style="right:498.79999999999995px;top:761.4165px;font-size:19px;">1,00</div>
<div class="t" style="right:371.79999999999995px;top:761.4165px;font-size:19px;">1,00</div>
<div class="t" style="right:239.29999999999995px;top:761.4165px;font-size:19px;">1,00</div>
<div class="t" style="right:103.79999999999995px;top:761.4165px;font-size:19px;">1,00</div>
<div class="t" style="left:296px;top:791.9165px;font-size:19px;">темп роста стоимости договора</div>
<div class="t" style="right:799.8px;top:791.9165px;font-size:19px;">1,04</div>
<div class="t" style="right:639.8px;top:791.9165px;font-size:19px;">1,04</div>
<div class="t" style="right:498.79999999999995px;top:791.9165px;font-size:19px;">1,04</div>
<div class="t" style="right:371.79999999999995px;top:791.9165px;font-size:19px;">1,04</div>
<div class="t" style="right:239.29999999999995px;top:791.9165px;font-size:19px;">1,04</div>
<div class="t" style="right:103.79999999999995px;top:791.9165px;font-size:19px;">1,04</div>
<div class="t" style="left:296px;top:851.9165px;font-size:19px;">Действующие проекты</div>
<div class="t" style="left:296px;top:941.9165px;font-size:19px;font-weight:bold">Мамин двор</div>
<div class="t" style="right:639.8px;top:941.9165px;font-size:19px;">0</div>
<div class="t" style="right:498.79999999999995px;top:941.9165px;font-size:19px;">0</div>
<div class="t" style="right:371.79999999999995px;top:941.9165px;font-size:19px;">0</div>
<div class="t" style="right:239.29999999999995px;top:941.9165px;font-size:19px;">0</div>
<div class="t" style="right:103.79999999999995px;top:941.9165px;font-size:19px;">0</div>
<div class="t" style="left:296px;top:975.2165px;font-size:19px;">доля оплаты, %</div>
<div class="t" style="left:296px;top:1038.4165px;font-size:19px;font-weight:bold">Доктор Мо</div>
<div class="t" style="right:799.8px;top:1038.4165px;font-size:19px;">2 500 000</div>
<div class="t" style="right:639.8px;top:1038.4165px;font-size:19px;">1 000 000</div>
<div class="t" style="right:498.79999999999995px;top:1038.4165px;font-size:19px;">250 000</div>
<div class="t" style="right:371.79999999999995px;top:1038.4165px;font-size:19px;">250 000</div>
<div class="t" style="right:239.29999999999995px;top:1038.4165px;font-size:19px;">500 000</div>
<div class="t" style="right:103.79999999999995px;top:1038.4165px;font-size:19px;">0</div>
<div class="t" style="left:296px;top:1071.4165px;font-size:19px;">доля оплаты, %</div>
<div class="t" style="right:639.8px;top:1071.4165px;font-size:19px;">40%</div>
<div class="t" style="right:498.79999999999995px;top:1071.4165px;font-size:19px;">10%</div>
<div class="t" style="right:371.79999999999995px;top:1071.4165px;font-size:19px;">10%</div>
<div class="t" style="right:239.29999999999995px;top:1071.4165px;font-size:19px;">20%</div>
<div style="left:242.5px;top:850px;width:22.5px;height:22.5px;border:2.600px solid #757575;border-radius:3px;background:#fff"></div>
<div style="left:242.5px;top:941px;width:22.5px;height:22.5px;border:2.600px solid #111;border-radius:3px"></div>
<div style="left:242.5px;top:1037px;width:22.5px;height:22.5px;border:2.600px solid #111;border-radius:3px"></div>
<div style="left:217px;top:1032px;width:1285.5px;height:67px;border:3px solid #ff1a0a"></div>
<div style="left:80px;top:1127px;width:1440px;height:20px;background:#f8f9fa;border-top:1px solid #dcdcdc"></div>
<div style="left:812px;top:1128px;width:691px;height:18.5px;background:#fff"></div>
<div style="left:815px;top:1130px;width:186px;height:12.5px;background:#dadce0;border-radius:6.500px"></div>
<div style="left:1459px;top:1128px;width:21.5px;height:18.5px;background:#f1f3f4;border:1px solid #dcdcdc"></div>
<div style="left:1480.5px;top:1128px;width:22px;height:18.5px;background:#f1f3f4;border:1px solid #dcdcdc"></div>
<svg style="left:1465px;top:1132px;" width="10" height="11" viewBox="0 0 10 11"><path d="M7.500 1.500v8L2.500 5.500z" fill="#777"/></svg>
<svg style="left:1487px;top:1132px;" width="10" height="11" viewBox="0 0 10 11"><path d="M2.500 1.500v8l5-4z" fill="#777"/></svg>
<div style="left:1504px;top:1082.5px;width:16px;height:23px;background:#f1f3f4;border:1px solid #dcdcdc"></div>
<div style="left:1504px;top:1105.5px;width:16px;height:22px;background:#f1f3f4;border:1px solid #dcdcdc"></div>
<svg style="left:1506.5px;top:1088px;" width="11" height="10" viewBox="0 0 11 10"><path d="M1.500 7.500h8L5.500 2.500z" fill="#888"/></svg>
<svg style="left:1506.5px;top:1111px;" width="11" height="10" viewBox="0 0 11 10"><path d="M1.500 2.500h8L5.500 7.500z" fill="#888"/></svg>
<div style="left:1506px;top:632px;width:10.5px;height:34px;background:#d0d0d0;border-radius:5.500px"></div>
<div style="left:80px;top:1147px;width:1440px;height:52px;background:#f9fbfd;border-top:1px solid #e4e7ea"></div>
<div style="left:160.5px;top:1172.5px;width:16.5px;height:2px;background:#444746"></div>
<div style="left:167.75px;top:1165.25px;width:2px;height:16.5px;background:#444746"></div>
<div style="left:216.5px;top:1166.6px;width:20px;height:2.1px;background:#444746"></div>
<div style="left:216.5px;top:1172.8px;width:20px;height:2.1px;background:#444746"></div>
<div style="left:216.5px;top:1179.0px;width:20px;height:2.1px;background:#444746"></div>
<div class="t" style="left:291.5px;top:1163.5px;font-size:20.300px;color:#444746;letter-spacing:.75px;-webkit-text-stroke:.25px #444746">Интервью</div>
<svg style="left:401.0px;top:1161.0px;" width="27" height="27" viewBox="0 0 24 24"><path d="M7 10l5 5 5-5z" fill="#444746" /></svg>
<div class="t" style="left:457px;top:1163.5px;font-size:20.300px;color:#444746;letter-spacing:.75px;-webkit-text-stroke:.25px #444746">Проекты в плане</div>
<svg style="left:638.0px;top:1161.0px;" width="27" height="27" viewBox="0 0 24 24"><path d="M7 10l5 5 5-5z" fill="#444746" /></svg>
<div style="left:676.5px;top:1148px;width:180px;height:51px;background:#e1e9f7"></div>
<div style="left:676.5px;top:1193.5px;width:180px;height:4px;background:#4a7ddf"></div>
<div class="t" style="left:693px;top:1163.5px;font-size:20px;color:#0b57d0;font-weight:bold;letter-spacing:.15px">Финмодель</div>
<svg style="left:820.5px;top:1161.0px;" width="27" height="27" viewBox="0 0 24 24"><path d="M7 10l5 5 5-5z" fill="#0b57d0" /></svg>
<div class="t" style="left:874.5px;top:1163.5px;font-size:20.300px;color:#444746;letter-spacing:.75px;-webkit-text-stroke:.25px #444746">Прогнозы по выручке в зависи</div>
<div style="left:1184.5px;top:1159px;width:1px;height:28px;background:#777"></div>
<svg style="left:1209px;top:1162px;" width="22" height="24" viewBox="0 0 22 24"><path d="M14 5.500L7.500 12l6.500 6.500" fill="none" stroke="#b9bcc0" stroke-width="2.200"/></svg>
<svg style="left:1266px;top:1162px;" width="22" height="24" viewBox="0 0 22 24"><path d="M8 5.500l6.500 6.500L8 18.500" fill="none" stroke="#444746" stroke-width="2.200"/></svg>
<svg style="left:1469px;top:1163px;" width="22" height="24" viewBox="0 0 22 24"><path d="M14 5.500L7.500 12l6.500 6.500" fill="none" stroke="#444746" stroke-width="2.400"/></svg>
</div><div id="wb"></div></div>
</body></html>
